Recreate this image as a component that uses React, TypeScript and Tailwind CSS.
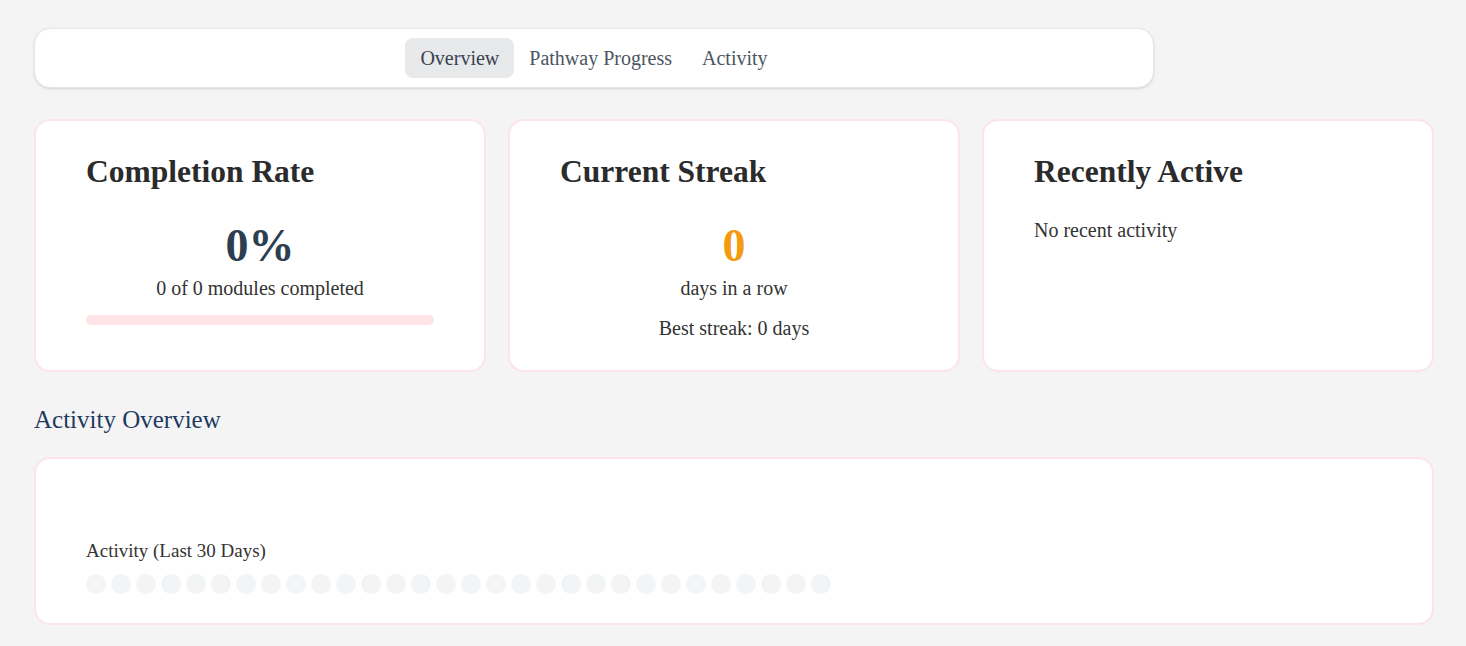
const serif = { fontFamily: '"Liberation Serif", "DejaVu Serif", serif' }

const tabs = ['Overview', 'Pathway Progress', 'Activity']

function Card({ title, children }: { title: string; children: React.ReactNode }) {
  return (
    <div className="h-[253px] rounded-2xl border-2 border-[#fde4e6] bg-white px-[50px] pt-[31px]">
      <h3 className="text-[31.5px] font-bold leading-[40px] text-[#2b2b2b]">{title}</h3>
      {children}
    </div>
  )
}

export default function App() {
  return (
    <div className="min-h-screen bg-[#f4f4f4] pl-[34px] pr-[32px] pt-[28px] text-[#333]" style={serif}>
      <div className="flex h-[60px] w-[1120px] items-center justify-center rounded-2xl border border-[#e6e6e6] bg-white shadow-sm">
        <div className="flex items-center">
          {tabs.map((t, i) => (
            <button
              key={t}
              className={
                i === 0
                  ? 'h-[40px] rounded-lg bg-[#e8e9eb] px-[15px] text-[20px] text-[#374151]'
                  : 'h-[40px] rounded-lg px-[15px] text-[20px] text-[#4b5563]'
              }
            >
              {t}
            </button>
          ))}
        </div>
      </div>

      <div className="mt-[31px] grid grid-cols-3 gap-[22px]">
        <Card title="Completion Rate">
          <div className="mt-[29px] text-center">
            <div className="text-[46px] font-bold leading-[50px] text-[#2c3e50]">0%</div>
            <div className="mt-[5px] text-[20px] leading-[24px] text-[#333]">0 of 0 modules completed</div>
          </div>
          <div className="mt-[15px] h-[10px] w-full rounded-full bg-[#fde4e6]" />
        </Card>
        <Card title="Current Streak">
          <div className="mt-[29px] text-center">
            <div className="text-[46px] font-bold leading-[50px] text-[#f39c12]">0</div>
            <div className="mt-[5px] text-[20px] leading-[24px] text-[#333]">days in a row</div>
            <div className="mt-[16px] text-[20px] leading-[24px] text-[#333]">Best streak: 0 days</div>
          </div>
        </Card>
        <Card title="Recently Active">
          <p className="mt-[26px] text-[20px] leading-[24px] text-[#333]">No recent activity</p>
        </Card>
      </div>

      <h2 className="mt-[33px] text-[25px] leading-[30px] text-[#1f3a5f]">Activity Overview</h2>

      <div className="mt-[22px] h-[168px] rounded-2xl border-2 border-[#fde4e6] bg-white px-[50px] pt-[81px]">
        <div className="text-[19px] leading-[22px] text-[#333]">Activity (Last 30 Days)</div>
        <div className="mt-[12px] flex gap-[5px]">
          {Array.from({ length: 30 }).map((_, i) => (
            <span key={i} className="h-[20px] w-[20px] rounded-full bg-[#f3f4f6]" />
          ))}
        </div>
      </div>
    </div>
  )
}
